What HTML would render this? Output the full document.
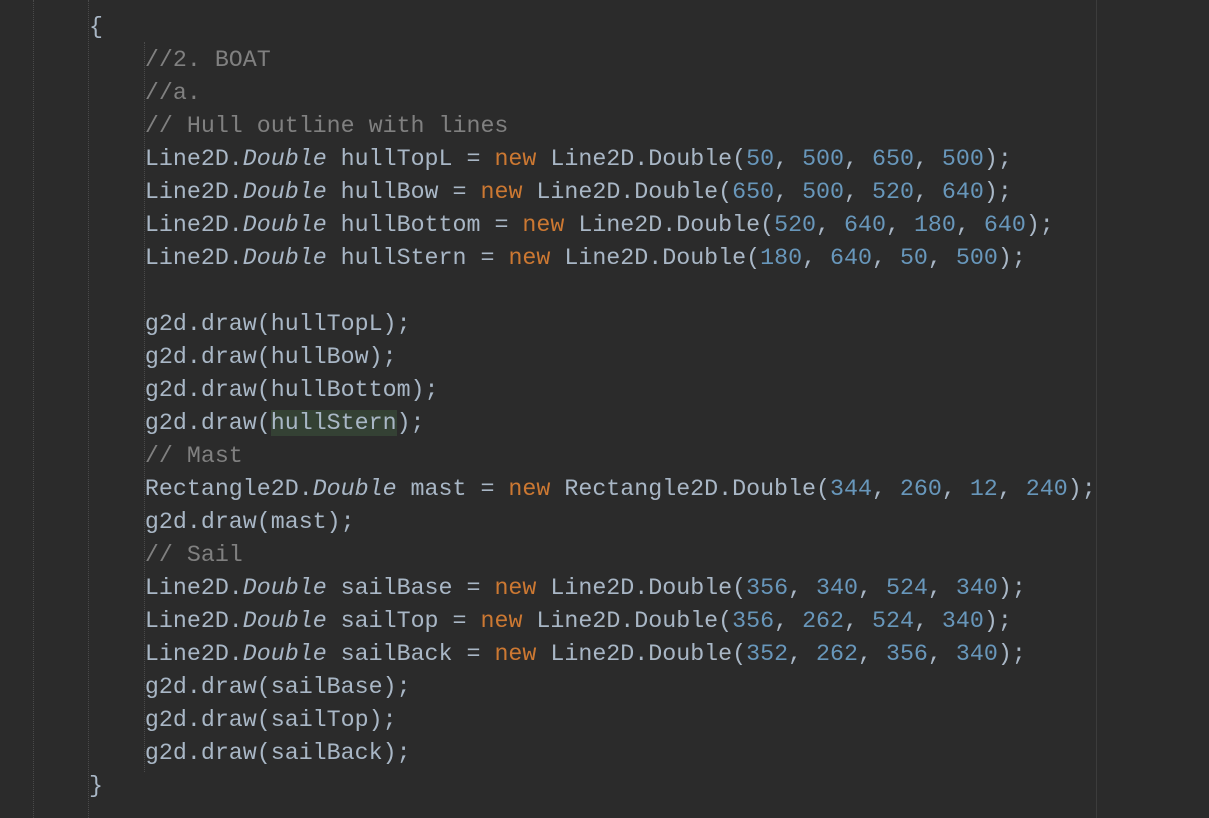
<!DOCTYPE html>
<html><head><style>
body{margin:0;width:1209px;height:818px;background:#2b2b2b;overflow:hidden;position:relative}
.g{position:absolute;width:0;border-left:1px dotted #4a4a4a}
pre{position:absolute;left:89px;top:11px;margin:0;font:23.3px/33px "Liberation Mono",monospace;color:#a9b7c6}
.k{color:#cc7832}.n{color:#6897bb}.c{color:#808080}.i{font-style:italic}.b{color:#a9b7c6}
.h{background:#344134}
</style></head><body>
<div class="g" style="left:33px;top:0;height:818px"></div>
<div class="g" style="left:88px;top:0;height:818px"></div>
<div class="g" style="left:144px;top:42px;height:730px"></div>
<div style="position:absolute;left:1096px;top:0;width:1px;height:818px;background:#3c3c3c"></div>
<pre><span class="b">{</span>
    <span class="c">//2. BOAT</span>
    <span class="c">//a.</span>
    <span class="c">// Hull outline with lines</span>
    Line2D.<span class="i">Double</span> hullTopL = <span class="k">new</span> Line2D.Double(<span class="n">50</span>, <span class="n">500</span>, <span class="n">650</span>, <span class="n">500</span>);
    Line2D.<span class="i">Double</span> hullBow = <span class="k">new</span> Line2D.Double(<span class="n">650</span>, <span class="n">500</span>, <span class="n">520</span>, <span class="n">640</span>);
    Line2D.<span class="i">Double</span> hullBottom = <span class="k">new</span> Line2D.Double(<span class="n">520</span>, <span class="n">640</span>, <span class="n">180</span>, <span class="n">640</span>);
    Line2D.<span class="i">Double</span> hullStern = <span class="k">new</span> Line2D.Double(<span class="n">180</span>, <span class="n">640</span>, <span class="n">50</span>, <span class="n">500</span>);

    g2d.draw(hullTopL);
    g2d.draw(hullBow);
    g2d.draw(hullBottom);
    g2d.draw(<span class="h">hullStern</span>);
    <span class="c">// Mast</span>
    Rectangle2D.<span class="i">Double</span> mast = <span class="k">new</span> Rectangle2D.Double(<span class="n">344</span>, <span class="n">260</span>, <span class="n">12</span>, <span class="n">240</span>);
    g2d.draw(mast);
    <span class="c">// Sail</span>
    Line2D.<span class="i">Double</span> sailBase = <span class="k">new</span> Line2D.Double(<span class="n">356</span>, <span class="n">340</span>, <span class="n">524</span>, <span class="n">340</span>);
    Line2D.<span class="i">Double</span> sailTop = <span class="k">new</span> Line2D.Double(<span class="n">356</span>, <span class="n">262</span>, <span class="n">524</span>, <span class="n">340</span>);
    Line2D.<span class="i">Double</span> sailBack = <span class="k">new</span> Line2D.Double(<span class="n">352</span>, <span class="n">262</span>, <span class="n">356</span>, <span class="n">340</span>);
    g2d.draw(sailBase);
    g2d.draw(sailTop);
    g2d.draw(sailBack);
<span class="b">}</span></pre>
</body></html>
